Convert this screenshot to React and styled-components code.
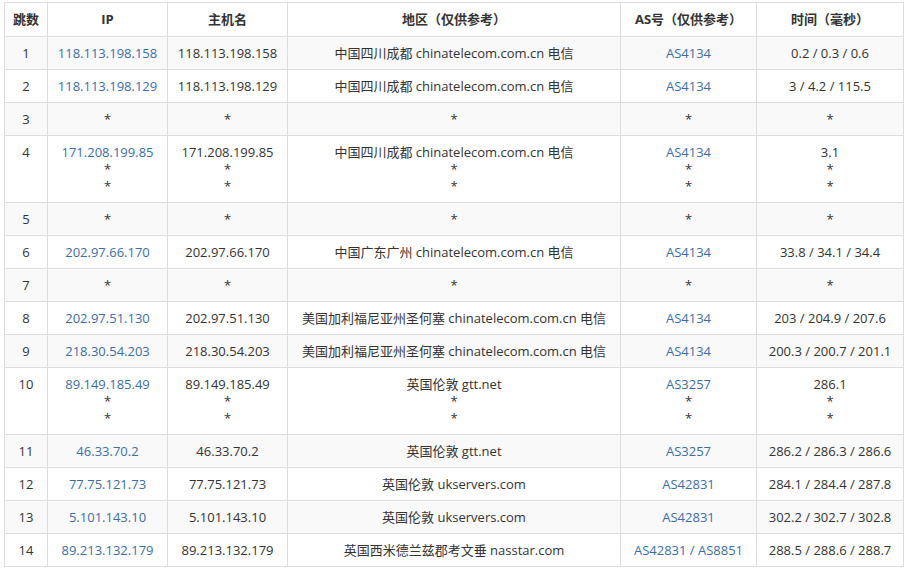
import React from "react";
import styled, { createGlobalStyle } from "styled-components";

const Global = createGlobalStyle`
  body { margin: 0; background: #fff; }
`;
const Wrap = styled.div`padding: 2px 0 0 4px;`;
const Table = styled.table`
  width: 899px; border-collapse: collapse; table-layout: fixed;
  font-family: "Open Sans", "Noto Sans CJK SC", sans-serif; font-size: 13px; color: #333;
  line-height: 17px;
`;
const Th = styled.th`
  border: 1px solid #ddd; padding: 8px 4px; font-weight: bold; text-align: center;
`;
const Tr = styled.tr`background: ${p => (p.$odd ? "#f9f9f9" : "#fff")};`;
const Td = styled.td`
  border: 1px solid #ddd; padding: 8px 4px 7px; text-align: center; vertical-align: top; white-space: nowrap;
`;
const Link = styled.span`color: #3b6ea8;`;
const Line = styled.div``;

const cn = "中国四川成都 chinatelecom.com.cn 电信";
const us = "美国加利福尼亚州圣何塞 chinatelecom.com.cn 电信";
const rows = [
  [["118.113.198.158"], ["118.113.198.158"], [cn], ["AS4134"], ["0.2 / 0.3 / 0.6"]],
  [["118.113.198.129"], ["118.113.198.129"], [cn], ["AS4134"], ["3 / 4.2 / 115.5"]],
  [["*"], ["*"], ["*"], ["*"], ["*"]],
  [["171.208.199.85", "*", "*"], ["171.208.199.85", "*", "*"], [cn, "*", "*"], ["AS4134", "*", "*"], ["3.1", "*", "*"]],
  [["*"], ["*"], ["*"], ["*"], ["*"]],
  [["202.97.66.170"], ["202.97.66.170"], ["中国广东广州 chinatelecom.com.cn 电信"], ["AS4134"], ["33.8 / 34.1 / 34.4"]],
  [["*"], ["*"], ["*"], ["*"], ["*"]],
  [["202.97.51.130"], ["202.97.51.130"], [us], ["AS4134"], ["203 / 204.9 / 207.6"]],
  [["218.30.54.203"], ["218.30.54.203"], [us], ["AS4134"], ["200.3 / 200.7 / 201.1"]],
  [["89.149.185.49", "*", "*"], ["89.149.185.49", "*", "*"], ["英国伦敦 gtt.net", "*", "*"], ["AS3257", "*", "*"], ["286.1", "*", "*"]],
  [["46.33.70.2"], ["46.33.70.2"], ["英国伦敦 gtt.net"], ["AS3257"], ["286.2 / 286.3 / 286.6"]],
  [["77.75.121.73"], ["77.75.121.73"], ["英国伦敦 ukservers.com"], ["AS42831"], ["284.1 / 284.4 / 287.8"]],
  [["5.101.143.10"], ["5.101.143.10"], ["英国伦敦 ukservers.com"], ["AS42831"], ["302.2 / 302.7 / 302.8"]],
  [["89.213.132.179"], ["89.213.132.179"], ["英国西米德兰兹郡考文垂 nasstar.com"], ["AS42831 / AS8851"], ["288.5 / 288.6 / 288.7"]],
];

const Cell = ({ lines, link }) => (
  <Td>
    {lines.map((l, i) => (
      <Line key={i}>{link && l !== "*" ? <Link>{l}</Link> : l}</Line>
    ))}
  </Td>
);

export default function App() {
  return (
    <Wrap>
      <Global />
      <Table>
        <colgroup>
          <col style={{ width: 43 }} /><col style={{ width: 120 }} /><col style={{ width: 120 }} />
          <col style={{ width: 333 }} /><col style={{ width: 136 }} /><col style={{ width: 147 }} />
        </colgroup>
        <thead>
          <tr>
            <Th>跳数</Th><Th>IP</Th><Th>主机名</Th><Th>地区（仅供参考）</Th><Th>AS号（仅供参考）</Th><Th>时间（毫秒）</Th>
          </tr>
        </thead>
        <tbody>
          {rows.map((r, i) => (
            <Tr key={i} $odd={i % 2 === 0}>
              <Td>{i + 1}</Td>
              <Cell lines={r[0]} link />
              <Cell lines={r[1]} />
              <Cell lines={r[2]} />
              <Cell lines={r[3]} link />
              <Cell lines={r[4]} />
            </Tr>
          ))}
        </tbody>
      </Table>
    </Wrap>
  );
}
